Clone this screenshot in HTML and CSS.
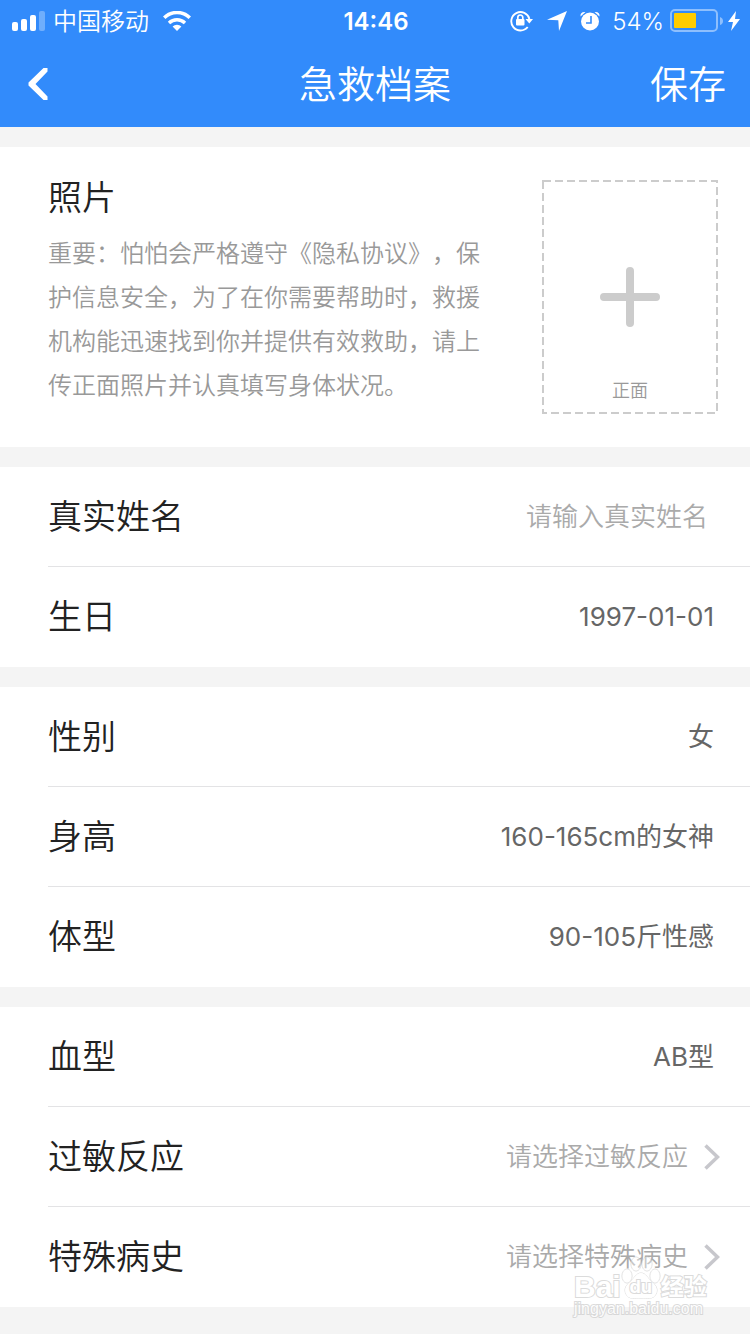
FILE: index.html
```
<!DOCTYPE html>
<html lang="zh-CN">

	<head>
		<meta charset="utf-8" />
		<meta name="viewport" content="width=device-width, initial-scale=1" />
		<title>急救档案</title>
		<link rel="stylesheet" href="styles.css">
	</head>

	<body>
		<header class="header">
			<!-- 状态栏 -->
			<div class="status">
				<div class="status-left">
					<svg width="34" height="20" viewBox="0 0 34 20" fill="#fff">
						<rect x="0" y="11" width="6" height="9" rx="2" />
						<rect x="9" y="8" width="6" height="12" rx="2" />
						<rect x="18" y="4" width="6" height="16" rx="2" />
						<rect x="27" y="0" width="6" height="20" rx="2" opacity="0.3" />
					</svg>
					<span class="carrier">中国移动</span>
					<svg width="28" height="20" viewBox="0 0 28 20">
						<path d="M1.200 6.800a18.200 18.200 0 0 1 25.600 0" fill="none" stroke="#fff" stroke-width="3.600" />
						<path d="M6 12a11.600 11.600 0 0 1 16 0" fill="none" stroke="#fff" stroke-width="3.400" />
						<path d="M14 20l-4.400-4.500a6.500 6.500 0 0 1 8.800 0z" fill="#fff" />
					</svg>
				</div>
				<span class="time">14:46</span>
				<div class="status-right">
					<svg width="24" height="22" viewBox="0 0 24 22">
						<path d="M17.700 17A9.200 9.200 0 1 1 19.400 9" fill="none" stroke="#fff" stroke-width="1.900" />
						<path d="M15.500 9h7.500l-3.700 4.500z" fill="#fff" />
						<rect x="6" y="9" width="8.500" height="6.500" rx="1" fill="#fff" />
						<path d="M7.800 10V7.500a2.500 2.500 0 0 1 5 0V10" fill="none" stroke="#fff" stroke-width="1.700" />
					</svg>
					<svg width="20" height="20" viewBox="0 0 20 20">
						<path d="M20 0L12 20l-.7-10.800L0 8.800z" fill="#fff" />
					</svg>
					<svg width="20" height="20" viewBox="0 0 20 20">
						<circle cx="10" cy="10.500" r="9" fill="#fff" />
						<path d="M.5 5.500Q0 .5 5.500 1zM19.500 5.500Q20 .5 14.500 1z" fill="#fff" />
						<path d="M11 5V12H6" fill="none" stroke="#328bfb" stroke-width="1.600" />
					</svg>
					<span class="percent">54%</span>
					<svg width="54" height="24" viewBox="0 0 54 24">
						<rect x="1" y="1" width="46" height="21" rx="4" fill="none" stroke="#fff" stroke-width="2" opacity="0.45" />
						<path d="M50 8q3 1 3 4t-3 4z" fill="#fff" opacity="0.450" />
						<rect x="4" y="4" width="22" height="15" rx="1" fill="#fc0" />
					</svg>
					<svg width="12" height="20" viewBox="0 0 12 20">
						<path d="M8 0L0 11h5L3 20l9-12H7z" fill="#fff" />
					</svg>
				</div>
			</div>
			<!-- 导航 -->
			<div class="nav">
				<button class="back" type="button" aria-label="返回">
					<svg width="20" height="32" viewBox="0 0 20 32">
						<path d="M15.500 0H19.500v3.500L7.500 16 19.500 28.500V32h-4L.5 17.500v-3z" fill="#fff" />
					</svg>
				</button>
				<h1>急救档案</h1>
				<button class="save" type="submit" form="form">保存</button>
			</div>
		</header>

		<form class="form" id="form">
			<section class="photo">
				<div class="photo-text">
					<h2>照片</h2>
					<p>重要：怕怕会严格遵守《隐私协议》，保护信息安全，为了在你需要帮助时，救援机构能迅速找到你并提供有效救助，请上传正面照片并认真填写身体状况。</p>
				</div>
				<button class="upload" type="button">
					<svg class="upload-frame" width="176" height="234">
						<rect x="1" y="1" width="174" height="232" fill="none" stroke="#ccc" stroke-width="2" stroke-dasharray="8 4" />
					</svg>
					<svg class="plus" width="60" height="60" viewBox="0 0 60 60">
						<path d="M4 30h52M30 4v52" stroke="#ccc" stroke-width="8" stroke-linecap="round" />
					</svg>
					<span>正面</span>
				</button>
			</section>

			<section class="group">
				<div class="row">
					<label for="name">真实姓名</label>
					<input class="name" id="name" type="text" placeholder="请输入真实姓名">
				</div>
				<div class="row">
					<label for="birthday">生日</label>
					<input id="birthday" type="text" value="1997-01-01">
				</div>
			</section>

			<section class="group">
				<div class="row">
					<label for="sex">性别</label>
					<button class="value" id="sex" type="button">女</button>
				</div>
				<div class="row">
					<label for="height">身高</label>
					<button class="value" id="height" type="button">160-165cm的女神</button>
				</div>
				<div class="row">
					<label for="shape">体型</label>
					<button class="value" id="shape" type="button">90-105斤性感</button>
				</div>
			</section>

			<section class="group">
				<div class="row">
					<label for="blood">血型</label>
					<button class="value" id="blood" type="button">AB型</button>
				</div>
				<div class="row">
					<label for="allergy">过敏反应</label>
					<button class="value empty" id="allergy" type="button">请选择过敏反应
						<svg width="16" height="26" viewBox="0 0 16 26">
							<path d="M1.500 1.500L13.500 13 1.500 24.500" fill="none" stroke="#c7c7cc" stroke-width="3.500" />
						</svg>
					</button>
				</div>
				<div class="row">
					<label for="history">特殊病史</label>
					<button class="value empty" id="history" type="button">请选择特殊病史
						<svg width="16" height="26" viewBox="0 0 16 26">
							<path d="M1.500 1.500L13.500 13 1.500 24.500" fill="none" stroke="#c7c7cc" stroke-width="3.500" />
						</svg>
					</button>
				</div>
				<!-- 水印 -->
				<div class="watermark">
					<div class="brand">
						<span class="bai">Bai</span>
						<span class="paw">
							<svg width="40" height="44" viewBox="0 0 40 44" fill="#fff" fill-opacity="0.5" stroke="#ccc">
								<ellipse cx="6" cy="21" rx="5" ry="7" />
								<ellipse cx="15" cy="9" rx="5" ry="7" />
								<ellipse cx="26" cy="9" rx="5" ry="7" />
								<ellipse cx="34" cy="21" rx="5" ry="7" />
								<path fill-opacity="1" d="M20 18c-5 0-7 6-11 9-5 4-6 8-4 12 3 6 9 4 15 4s12 2 15-4c2-4 1-8-4-12-4-3-6-9-11-9z" />
							</svg>
							<span class="du">du</span>
						</span>
						<span class="jingyan">经验</span>
					</div>
					<div class="site">jingyan.baidu.com</div>
				</div>
			</section>
		</form>
	</body>

</html>
```
FILE: styles.css
```
* {
	padding: 0;
	margin: 0;
	box-sizing: border-box;
}

body {
	background: #f4f4f4;
	color: #222;
	font-family: Inter, "Noto Sans CJK SC", sans-serif;
	font-weight: 350;
	text-spacing-trim: space-all;
}

button,
input {
	border: 0;
	background: none;
	font: inherit;
	color: inherit;
}

svg {
	display: block;
	flex: none;
}

.header {
	background: #328bfb;
	color: #fff;
}

.status {
	display: grid;
	grid-template-columns: 1fr auto 1fr;
	align-items: center;
	height: 40px;
	padding: 0 10px 0 12px;
	font-size: 24px;
	line-height: 40px;
}

.status-left,
.status-right {
	display: flex;
	align-items: center;
}

.status-right {
	justify-content: flex-end;
}

.status span {
	padding-top: 2px;
}

.carrier {
	margin: 0 14px 0 7px;
}

.time {
	font-weight: 600;
}

.status-right svg {
	margin-left: 13px;
}

.percent {
	margin-left: 12px;
}

.status-right .percent + svg {
	margin-left: 6px;
}

.status-right .percent + svg + svg {
	margin-left: 4px;
}

.nav {
	display: grid;
	grid-template-columns: 1fr auto 1fr;
	align-items: center;
	height: 87px;
	padding: 0 24px;
}

.nav h1,
.save {
	font-size: 38px;
	line-height: 56px;
	font-weight: 350;
}

.back {
	justify-self: start;
	padding-left: 4px;
}

.save {
	justify-self: end;
}

.form {
	display: flex;
	flex-direction: column;
	gap: 20px;
	padding: 20px 0 27px;
}

.photo,
.group {
	background: #fff;
}

.photo {
	display: flex;
	gap: 53px;
	padding: 26px 32px 33px 48px;
}

.photo-text {
	flex: 1;
}

.photo h2 {
	font-size: 34px;
	line-height: 50px;
	font-weight: 350;
}

.photo p {
	margin-top: 9px;
	font-size: 24px;
	line-height: 44px;
	color: #999;
}

.upload {
	position: relative;
	display: flex;
	flex-direction: column;
	align-items: center;
	justify-content: space-between;
	width: 176px;
	height: 234px;
	margin-top: 7px;
	padding: 87px 0 10px;
	font-size: 18px;
	line-height: 26px;
	color: #999;
}

.upload-frame {
	position: absolute;
	left: 0;
	top: 0;
}

.group {
	position: relative;
	padding-left: 48px;
}

.row {
	display: flex;
	align-items: center;
	justify-content: space-between;
	min-height: 100px;
	padding: 0 36px 0 0;
	border-bottom: 1px solid #e3e3e5;
}

.group .row:nth-child(3),
.group .row:last-child {
	border-bottom: 0;
}

.row label {
	font-size: 34px;
	line-height: 50px;
}

.row input,
.value {
	font-size: 26px;
	line-height: 38px;
	font-weight: 400;
	text-align: right;
	color: #666;
}

.row input {
	flex: 1;
	min-width: 0;
}

.row .name {
	padding-right: 6px;
	font-weight: 350;
}

.name::placeholder {
	color: #aaa;
	opacity: 1;
}

.row .empty {
	display: flex;
	align-items: center;
	gap: 16px;
	margin-right: -6px;
	font-weight: 350;
	color: #aaa;
}

.watermark {
	position: absolute;
	right: 40px;
	bottom: -12px;
	width: 136px;
	opacity: 0.7;
	color: #fff;
	-webkit-text-stroke: 2px #ccc;
	paint-order: stroke fill;
	pointer-events: none;
}

.brand {
	display: flex;
	align-items: flex-end;
	font-weight: 700;
	line-height: 24px;
}

.bai {
	font-family: "Liberation Sans", sans-serif;
	font-size: 30px;
}

.jingyan {
	font-size: 23px;
}

.paw {
	position: relative;
}

.du {
	position: absolute;
	left: 0;
	right: 0;
	bottom: 0;
	text-align: center;
	font-size: 18px;
}

.site {
	font-family: "Liberation Sans", sans-serif;
	font-size: 16px;
	line-height: 20px;
}
```
